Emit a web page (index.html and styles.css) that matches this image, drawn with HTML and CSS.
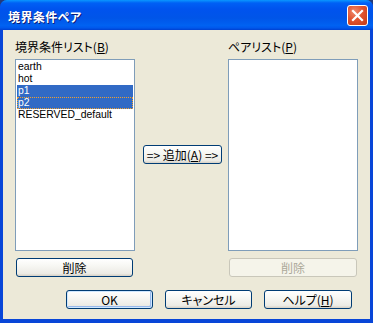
FILE: index.html
```html
<!DOCTYPE html>
<html lang="ja">
<head>
    <meta charset="UTF-8">
    <title>境界条件ペア</title>
    <link rel="stylesheet" href="styles.css">
</head>
<body>

<div class="window">
    <!-- タイトルバー -->
    <div class="titlebar">
        <span class="title">境界条件ペア</span>
        <button class="close" aria-label="閉じる">
            <svg width="13" height="13" viewBox="0 0 13 13">
                <path d="M2 2 L11 11 M11 2 L2 11" stroke="#fff" stroke-width="2.2" stroke-linecap="square"/>
            </svg>
        </button>
    </div>

    <div class="content">
        <div class="columns">
            <div class="col col-left">
                <div class="label">境界条件リスト(<u>B</u>)</div>
                <div class="listbox">
                    <div class="item">earth</div>
                    <div class="item">hot</div>
                    <div class="item selected">p1</div>
                    <div class="item selected focus">p2</div>
                    <div class="item">RESERVED_default</div>
                </div>
                <button class="btn btn-delete">削除</button>
            </div>

            <div class="col col-mid">
                <button class="btn btn-add">=&gt; 追加(<u>A</u>) =&gt;</button>
            </div>

            <div class="col col-right">
                <div class="label">ペアリスト(<u>P</u>)</div>
                <div class="listbox"></div>
                <button class="btn btn-delete" disabled>削除</button>
            </div>
        </div>

        <div class="actions">
            <button class="btn btn-default">OK</button>
            <button class="btn">キャンセル</button>
            <button class="btn">ヘルプ(<u>H</u>)</button>
        </div>
    </div>
</div>

</body>
</html>
```

FILE: styles.css
```css
/* ウィンドウ全体 */
html, body {
    margin: 0;
    padding: 0;
    background: #243a7a;
}
body {
    font-family: "Noto Sans CJK JP", "Liberation Sans", sans-serif;
    font-size: 12px;
    font-feature-settings: "palt";
    color: #000;
}
.window {
    width: 373px;
    height: 323px;
    display: flex;
    flex-direction: column;
    background: #0846d8;
    border-radius: 7px 7px 0 0;
    overflow: hidden;
}

/* タイトルバー */
.titlebar {
    height: 30px;
    flex: none;
    display: flex;
    align-items: flex-start;
    justify-content: space-between;
    background: linear-gradient(#0a97ff 0, #0060f5 10%, #0053ee 30%, #0055e8 60%, #0062f2 85%, #0058ec 93%, #0040d0 100%);
}
.title {
    color: #fff;
    font-weight: bold;
    font-size: 12px;
    letter-spacing: 0.4px;
    line-height: 14px;
    padding: 10px 0 0 8px;
    text-shadow: 1px 1px 0 #0a1e7a;
}
.close {
    width: 21px;
    height: 21px;
    margin: 5px 5px 0 0;
    padding: 0;
    border: 1px solid #fff;
    border-radius: 3px;
    background: radial-gradient(circle at 35% 30%, #f08a6e 0, #e0532f 45%, #c43a14 100%);
    display: flex;
    align-items: center;
    justify-content: center;
}

/* 本体 */
.content {
    flex: 1;
    margin: 0 3px 4px 3px;
    background: #ece9d8;
    padding: 10px 0 0 12px;
}
.columns {
    display: flex;
    align-items: flex-start;
}
.col {
    display: flex;
    flex-direction: column;
}
.col-left {
    width: 120px;
}
.col-mid {
    width: 79px;
    margin-left: 8px;
    padding-top: 105px;
}
.col-right {
    width: 130px;
    margin-left: 6px;
}
.label {
    height: 13px;
    line-height: 13px;
    margin-bottom: 6px;
    white-space: nowrap;
}
.listbox {
    height: 189px;
    background: #fff;
    border: 1px solid #7f9db9;
    padding: 1px 1px 0 1px;
}
.item {
    height: 12px;
    line-height: 12px;
    font-family: "Liberation Sans", "Noto Sans CJK JP", sans-serif;
    font-size: 10.4px;
    padding-left: 1px;
    white-space: nowrap;
}
.item.selected {
    background: #316ac5;
    color: #fff;
}
.item.focus {
    outline: 1px dotted #f0a030;
    outline-offset: -1px;
}

/* ボタン */
.btn {
    font-family: inherit;
    font-size: 12px;
    font-feature-settings: "palt";
    height: 19px;
    line-height: 15px;
    padding: 0;
    color: #000;
    border: 1px solid #003c74;
    border-radius: 3px;
    background: linear-gradient(#ffffff 0, #f7f7f3 40%, #ecebe5 85%, #d6d0c5 100%);
}
.btn:disabled {
    color: #aca899;
    border-color: #c9c7ba;
    background: #f5f4ea;
}
.btn-delete {
    margin-top: 7px;
}
.col-left .btn-delete {
    width: 117px;
    margin-left: 1px;
}
.col-right .btn-delete {
    width: 128px;
    margin-left: 1px;
}
.btn-add {
    width: 79px;
}
.btn-default {
    box-shadow: inset 0 0 0 1px #cee7ff, inset -1px -1px 0 1px #98b8ea;
}

/* 下部ボタン */
.actions {
    display: flex;
    gap: 12px;
    margin: 13px 0 0 51px;
}
.actions .btn {
    width: 87px;
}
.actions .btn:last-child {
    width: 88px;
}
```
